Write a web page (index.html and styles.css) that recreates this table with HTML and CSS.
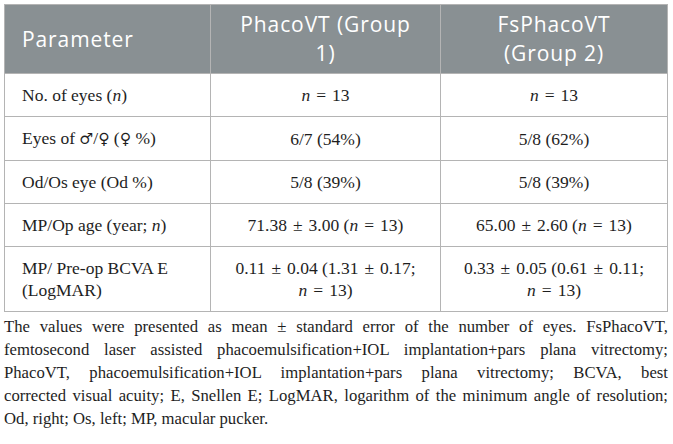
FILE: index.html
```html
<!DOCTYPE html>
<html lang="en">
<head>
    <meta charset="UTF-8">
    <title>Table 1</title>
    <link rel="stylesheet" href="styles.css">
</head>
<body>
    <div class="table-wrap">
        <table class="data-table">
            <thead>
                <tr>
                    <th class="col-param">Parameter</th>
                    <th>PhacoVT (Group<br>1)</th>
                    <th>FsPhacoVT<br>(Group 2)</th>
                </tr>
            </thead>
            <tbody>
                <tr>
                    <td>No. of eyes (<i>n</i>)</td>
                    <td><i>n</i><span class="op">=</span>13</td>
                    <td><i>n</i><span class="op">=</span>13</td>
                </tr>
                <tr>
                    <td>Eyes of <span class="sym">♂</span>/<span class="sym">♀</span> (<span class="sym">♀</span> %)</td>
                    <td>6/7 (54%)</td>
                    <td>5/8 (62%)</td>
                </tr>
                <tr>
                    <td>Od/Os eye (Od %)</td>
                    <td>5/8 (39%)</td>
                    <td>5/8 (39%)</td>
                </tr>
                <tr>
                    <td>MP/Op age (year; <i>n</i>)</td>
                    <td>71.38<span class="op">±</span>3.00 (<i>n</i><span class="op">=</span>13)</td>
                    <td>65.00<span class="op">±</span>2.60 (<i>n</i><span class="op">=</span>13)</td>
                </tr>
                <tr>
                    <td>MP/ Pre-op BCVA E<br>(LogMAR)</td>
                    <td>0.11<span class="op">±</span>0.04 (1.31<span class="op">±</span>0.17;<br><i>n</i><span class="op">=</span>13)</td>
                    <td>0.33<span class="op">±</span>0.05 (0.61<span class="op">±</span>0.11;<br><i>n</i><span class="op">=</span>13)</td>
                </tr>
            </tbody>
        </table>
        <p class="caption">
            <span class="line">The values were presented as mean ± standard error of the number of eyes. FsPhacoVT,</span>
            <span class="line">femtosecond laser assisted phacoemulsification+IOL implantation+pars plana vitrectomy;</span>
            <span class="line">PhacoVT, phacoemulsification+IOL implantation+pars plana vitrectomy; BCVA, best</span>
            <span class="line">corrected visual acuity; E, Snellen E; LogMAR, logarithm of the minimum angle of resolution;</span>
            <span class="line last">Od, right; Os, left; MP, macular pucker.</span>
        </p>
    </div>
</body>
</html>
```

FILE: styles.css
```css
* {
    margin: 0;
    padding: 0;
    box-sizing: border-box;
}

body {
    background: #ffffff;
    padding: 4px 5px 0 4px;
    font-family: 'Liberation Serif', 'Times New Roman', serif;
    color: #1e1e1e;
}

.data-table {
    width: 664px;
    border-collapse: collapse;
    table-layout: fixed;
    border: 1px solid #b4b4b4;
}

.data-table th,
.data-table td {
    border: 1px solid #b4b4b4;
    text-align: center;
    vertical-align: middle;
}

.data-table th {
    background: #899093;
    color: #ffffff;
    font-family: 'Open Sans', 'Liberation Sans', sans-serif;
    font-weight: normal;
    font-size: 21px;
    letter-spacing: 0.9px;
    line-height: 29px;
    padding: 5px 10px;
}

.data-table th:nth-child(1) { width: 206px; }
.data-table th:nth-child(2) { width: 230px; }

.data-table th.col-param,
.data-table td:first-child {
    text-align: left;
    padding-left: 17px;
}

.data-table td {
    font-size: 17.5px;
    line-height: 22px;
    padding: 10px 10px;
}

.op {
    margin: 0 6px;
}

.sym {
    font-family: 'DejaVu Serif', serif;
    font-size: 15.5px;
}

.caption {
    margin-top: 3px;
    font-size: 16.7px;
    line-height: 23px;
    width: 664px;
}

.caption .line {
    display: block;
    text-align: justify;
    text-align-last: justify;
}

.caption .line.last {
    text-align-last: left;
}
```
